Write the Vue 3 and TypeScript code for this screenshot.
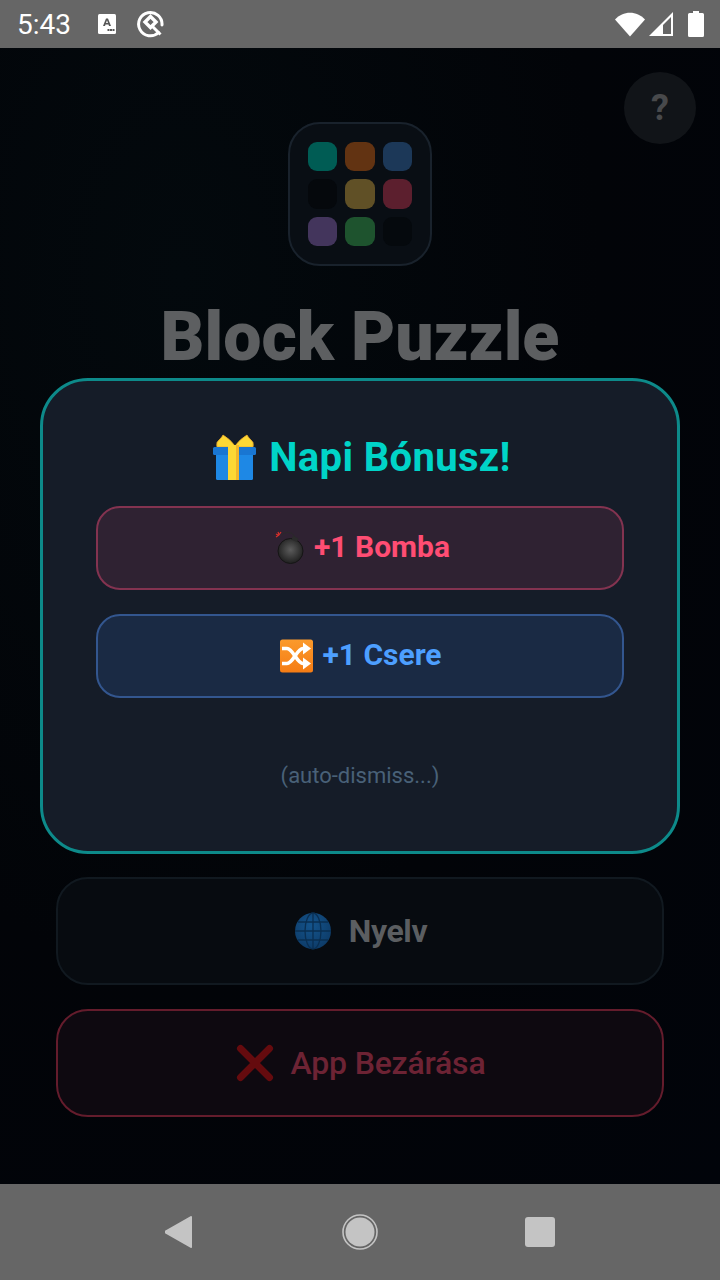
<script setup lang="ts">
interface Tile {
  id: number
  color: string
}

const tiles: Tile[] = [
  { id: 1, color: '#005c54' },
  { id: 2, color: '#623312' },
  { id: 3, color: '#1c3858' },
  { id: 4, color: '#05080c' },
  { id: 5, color: '#605026' },
  { id: 6, color: '#5c1f2e' },
  { id: 7, color: '#43355c' },
  { id: 8, color: '#1e532e' },
  { id: 9, color: '#05090d' }
]
</script>

<template>
  <div class="screen">
    <header class="status-bar">
      <div class="status-left">
        <span class="clock">5:43</span>
        <svg class="ic-a" viewBox="0 0 18 20" width="18" height="20">
          <rect width="18" height="20" rx="1.5" fill="#fff" />
          <path d="M5 12 8 4.500h2L13 12h-2l-.5-1.500h-3L7 12zM8 9h2L9 6.200z" fill="#555" />
          <rect x="9.500" y="15" width="2" height="2" fill="#555" />
          <rect x="12" y="15" width="2" height="2" fill="#555" />
          <rect x="14.500" y="15" width="2" height="2" fill="#555" />
        </svg>
        <svg viewBox="0 0 28 28" width="28" height="28">
          <path d="M21.500 22.500A11.700 11.700 0 1 1 25 15" fill="none" stroke="#fff" stroke-width="3" stroke-linecap="round" />
          <path d="M13.500 6.500 19 12l-5.500 5.500L8 12z" fill="none" stroke="#fff" stroke-width="3.400" />
          <path d="M14.500 15.500l9 9" stroke="#fff" stroke-width="3" />
        </svg>
      </div>
      <div class="status-right">
        <svg viewBox="0 0 30 26" width="30" height="26">
          <path d="M0 8.500C8-.5 22-.5 30 8.500L15 25.500z" fill="#fff" />
        </svg>
        <svg viewBox="0 0 26 26" width="26" height="26">
          <path fill-rule="evenodd" d="M1 25 25 1v24zM15 23h8V6l-8 8z" fill="#fff" />
        </svg>
        <svg class="ic-batt" viewBox="0 0 16 26" width="16" height="26">
          <path d="M5 0h6v2h3.500q1.500 0 1.500 1.500v21q0 1.500-1.500 1.500h-13Q0 26 0 24.500v-21Q0 2 1.500 2H5z" fill="#fff" />
        </svg>
      </div>
    </header>

    <main class="game-menu">
      <button class="help-btn">?</button>

      <div class="logo">
        <span v-for="t in tiles" :key="t.id" class="tile" :style="{ background: t.color }"></span>
      </div>
      <h1 class="title">Block Puzzle</h1>

      <div class="menu-buttons">
        <button class="menu-btn">
          <svg viewBox="-2 -2 40 40" width="40" height="40">
            <defs>
              <radialGradient id="globeFill" cx="45%" cy="35%" r="70%">
                <stop offset="0" stop-color="#14548c" />
                <stop offset="1" stop-color="#0d3a66" />
              </radialGradient>
            </defs>
            <circle cx="18" cy="18" r="18" fill="url(#globeFill)" />
            <g fill="none" stroke="#0a2f52" stroke-width="1.300">
              <ellipse cx="18" cy="18" rx="8" ry="18" />
              <path d="M18 0v36M0 18h36M3 9h30M3 27h30" />
            </g>
          </svg>
          <span>Nyelv</span>
        </button>
        <button class="menu-btn danger">
          <svg viewBox="-2 -2 40 40" width="40" height="40">
            <path d="M3.500 3.500 32.500 32.500M32.500 3.500 3.500 32.500" stroke="#650b0e" stroke-width="7" stroke-linecap="round" />
          </svg>
          <span>App Bezárása</span>
        </button>
      </div>

      <div class="overlay">
        <section class="bonus-modal">
          <h2 class="bonus-title">
            <svg viewBox="-4 -1 48 48" width="48" height="48">
              <path d="M22 13H4Q2.500 8 7 5 9 3 10 1 17 5 22 12z" fill="#fdd835" stroke="#eaa928" stroke-width=".8" />
              <path d="M22 13h18q1.500-5-3-8-2-2-3-4-7 4-12 11z" fill="#fdd835" stroke="#eaa928" stroke-width=".8" />
              <rect x="3" y="18" width="37" height="28" rx="1.500" fill="#1e88e5" />
              <rect y="13" width="43" height="8" rx="1.500" fill="#1976d2" />
              <rect x="15" y="11" width="11" height="35" fill="#fdd835" />
              <rect x="23" y="11" width="3" height="35" fill="#f2b52c" />
            </svg>
            <span>Napi Bónusz!</span>
          </h2>

          <div class="reward bomb">
            <svg viewBox="0 0 36 36" width="36" height="36">
              <defs>
                <radialGradient id="bombFill" cx="50%" cy="45%" r="55%">
                  <stop offset="0" stop-color="#5c5c5c" />
                  <stop offset="1" stop-color="#1f1f1f" />
                </radialGradient>
              </defs>
              <path d="M12 5C16 1 24 1 26 10" fill="none" stroke="#2a2a2a" stroke-width="1" />
              <circle cx="20.500" cy="21" r="12.500" fill="url(#bombFill)" stroke="#151515" stroke-width="1" />
              <rect x="22" y="7" width="6" height="4" fill="#2b2b2b" transform="rotate(25 25 9)" />
              <path d="M6 4l2 1M8 2l1 3M11 2 9 5M6 7l3-2" stroke="#d9302a" stroke-width="1.200" />
            </svg>
            <span>+1 Bomba</span>
          </div>

          <div class="reward swap">
            <svg viewBox="0 0 36 36" width="36" height="36">
              <defs>
                <linearGradient id="swapFill" x1="0" y1="0" x2="0" y2="1">
                  <stop offset="0" stop-color="#fb9a2c" />
                  <stop offset="1" stop-color="#f57c14" />
                </linearGradient>
              </defs>
              <rect x="2" y="1.500" width="33" height="33" rx="2.500" fill="url(#swapFill)" />
              <g fill="none" stroke="#fff" stroke-width="3.600">
                <path d="M4 10.500h5c6 0 10 15 16 15h3" />
                <path d="M4 25.500h5c6 0 10-15 16-15h3" />
              </g>
              <path d="M25 4.500l8 6-8 6zM25 19.500l8 6-8 6z" fill="#fff" />
            </svg>
            <span>+1 Csere</span>
          </div>

          <p class="dismiss">(auto-dismiss...)</p>
        </section>
      </div>
    </main>

    <footer class="nav-bar">
      <svg viewBox="2 0 30 34" width="30" height="34">
        <path d="M28 2 2 17l26 15z" fill="#c4c4c4" stroke="#c4c4c4" stroke-width="2" stroke-linejoin="round" />
      </svg>
      <svg viewBox="0 0 36 36" width="36" height="36">
        <circle cx="18" cy="18" r="17" fill="none" stroke="#c4c4c4" stroke-width="1.600" />
        <circle cx="18" cy="18" r="14.500" fill="#c4c4c4" />
      </svg>
      <span class="nav-square"></span>
    </footer>
  </div>
</template>

<style scoped>
.screen {
  width: 720px;
  height: 1280px;
  display: flex;
  flex-direction: column;
  overflow: hidden;
  font-family: Roboto, "Noto Sans", sans-serif;
}

.status-bar {
  height: 48px;
  flex: none;
  background: #666;
  display: flex;
  align-items: center;
  justify-content: space-between;
  padding: 0 16px 0 17px;
  box-sizing: border-box;
}

.status-left,
.status-right {
  display: flex;
  align-items: center;
}

.clock {
  color: #fff;
  font-size: 28px;
  width: 81px;
}

.ic-a {
  margin-right: 21px;
}

.status-right svg {
  margin-left: 3px;
}

.status-right .ic-batt {
  margin-left: 14px;
}

.game-menu {
  flex: 1;
  position: relative;
  display: flex;
  flex-direction: column;
  align-items: center;
  padding: 74px 56px 67px;
  box-sizing: border-box;
  background: radial-gradient(ellipse at 25% 20%, #03090d 0%, #020408 55%, #01040a 100%);
}

.help-btn {
  position: absolute;
  top: 24px;
  right: 24px;
  width: 72px;
  height: 72px;
  padding: 0;
  border: 0;
  border-radius: 50%;
  background: #111418;
  color: #48494b;
  font-family: inherit;
  font-size: 36px;
  font-weight: 700;
}

.logo {
  width: 144px;
  height: 144px;
  box-sizing: border-box;
  border: 2px solid #19222c;
  border-radius: 32px;
  background: #090e14;
  padding: 18px;
  display: grid;
  grid-template-columns: repeat(3, 1fr);
  gap: 8px;
}

.tile {
  border-radius: 9px;
}

.title {
  margin: 30px 0 0;
  font-size: 68px;
  line-height: 82px;
  font-weight: 900;
  color: #5d5f61;
}

.menu-buttons {
  margin-top: auto;
  width: 100%;
  display: flex;
  flex-direction: column;
  gap: 24px;
}

.menu-btn {
  height: 108px;
  box-sizing: border-box;
  border: 2px solid #111920;
  border-radius: 32px;
  background: #070b10;
  color: #5b5e61;
  font-family: inherit;
  font-size: 32px;
  font-weight: 700;
  letter-spacing: -0.4px;
  display: flex;
  align-items: center;
  justify-content: center;
  gap: 16px;
}

.menu-btn.danger {
  border-color: #641c2c;
  background: #0e0910;
  color: #6d2334;
  font-weight: 500;
  letter-spacing: -0.2px;
}

.overlay {
  position: absolute;
  inset: 0;
  display: flex;
  align-items: center;
  justify-content: center;
}

.bonus-modal {
  width: 640px;
  height: 476px;
  box-sizing: border-box;
  border: 3px solid #0d8a8a;
  border-radius: 48px;
  background: #151c28;
  padding: 51px 53px 0;
  display: flex;
  flex-direction: column;
}

.bonus-title {
  margin: 0 0 24px;
  height: 50px;
  color: #00d4c8;
  font-size: 40px;
  font-weight: 700;
  letter-spacing: 0.35px;
  display: flex;
  align-items: center;
  justify-content: center;
  gap: 12px;
}

.reward {
  height: 84px;
  box-sizing: border-box;
  border-radius: 24px;
  border: 2px solid;
  margin-bottom: 24px;
  font-size: 30px;
  font-weight: 700;
  display: flex;
  align-items: center;
  justify-content: center;
  gap: 8px;
}

.reward span {
  margin-bottom: 3px;
}

.reward.bomb {
  border-color: #833350;
  background: #2f2232;
  color: #ff4d73;
}

.reward.swap {
  border-color: #33568f;
  background: #1a2a44;
  color: #4d9fff;
}

.dismiss {
  margin: 39px 0 0;
  text-align: center;
  font-size: 22px;
  line-height: 30px;
  color: #496178;
}

.nav-bar {
  height: 96px;
  flex: none;
  background: #666;
  display: grid;
  grid-template-columns: repeat(3, 180px);
  justify-content: center;
  justify-items: center;
  align-items: center;
}

.nav-square {
  width: 30px;
  height: 30px;
  border-radius: 3px;
  background: #c4c4c4;
}
</style>
